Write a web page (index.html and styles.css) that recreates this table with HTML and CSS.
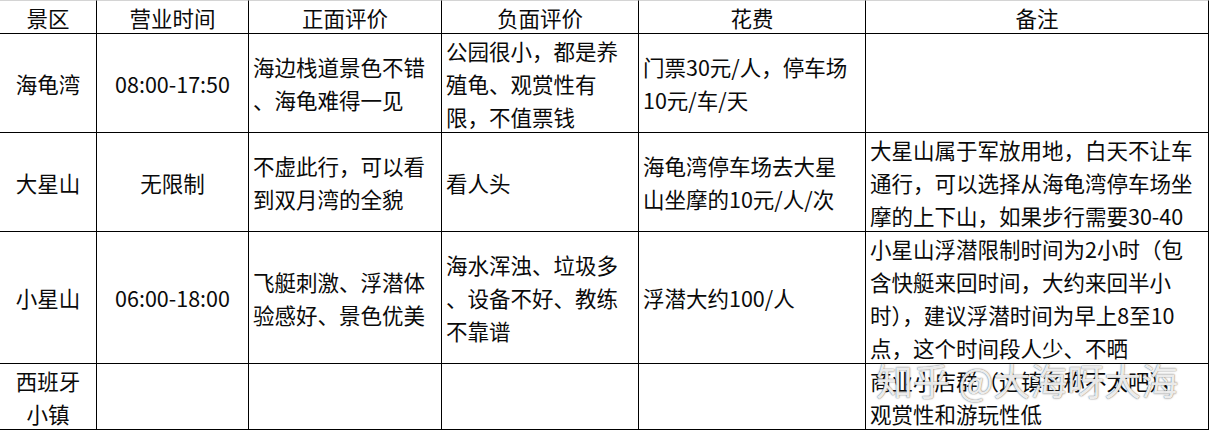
FILE: index.html
```html
<!DOCTYPE html>
<html lang="zh-CN">
<head>
<meta charset="utf-8">
<title>景区对比</title>
<link rel="stylesheet" href="styles.css">
</head>
<body>
<div class="page">
  <div class="sheet">
    <div class="cell head c">景区</div>
    <div class="cell head c">营业时间</div>
    <div class="cell head c">正面评价</div>
    <div class="cell head c">负面评价</div>
    <div class="cell head c">花费</div>
    <div class="cell head c">备注</div>

    <div class="cell c">海龟湾</div>
    <div class="cell c">08:00-17:50</div>
    <div class="cell">海边栈道景色不错<br>、海龟难得一见</div>
    <div class="cell">公园很小，都是养<br>殖龟、观赏性有<br>限，不值票钱</div>
    <div class="cell">门票30元/人，停车场<br>10元/车/天</div>
    <div class="cell"></div>

    <div class="cell c">大星山</div>
    <div class="cell c">无限制</div>
    <div class="cell">不虚此行，可以看<br>到双月湾的全貌</div>
    <div class="cell">看人头</div>
    <div class="cell">海龟湾停车场去大星<br>山坐摩的10元/人/次</div>
    <div class="cell">大星山属于军放用地，白天不让车<br>通行，可以选择从海龟湾停车场坐<br>摩的上下山，如果步行需要30-40</div>

    <div class="cell c">小星山</div>
    <div class="cell c">06:00-18:00</div>
    <div class="cell">飞艇刺激、浮潜体<br>验感好、景色优美</div>
    <div class="cell">海水浑浊、垃圾多<br>、设备不好、教练<br>不靠谱</div>
    <div class="cell">浮潜大约100/人</div>
    <div class="cell">小星山浮潜限制时间为2小时（包<br>含快艇来回时间，大约来回半小<br>时），建议浮潜时间为早上8至10<br>点，这个时间段人少、不晒</div>

    <div class="cell c">西班牙<br>小镇</div>
    <div class="cell"></div>
    <div class="cell"></div>
    <div class="cell"></div>
    <div class="cell"></div>
    <div class="cell">商业小店群（这镇名称不太吧），<br>观赏性和游玩性低</div>
  </div>
  <div class="watermark">知乎 @大海呀大海</div>
</div>
</body>
</html>
```

FILE: styles.css
```css
html, body {
  margin: 0;
  padding: 0;
  background: #ffffff;
}

.page {
  position: relative;
  width: 1209px;
  height: 430px;
  overflow: hidden;
  font-family: "Noto Sans CJK SC", "Microsoft YaHei", sans-serif;
  color: #0a0a0a;
}

.sheet {
  display: grid;
  grid-template-columns: 97px 152px 193px 197px 227px 343px;
  grid-template-rows: 34px 99px 99px 132px 66px;
}

.cell {
  box-sizing: border-box;
  border-right: 1px solid #000000;
  border-bottom: 1px solid #000000;
  display: flex;
  align-items: center;
  justify-content: flex-start;
  padding: 0 3px 0 4px;
  font-size: 21.5px;
  line-height: 33px;
  white-space: nowrap;
  overflow: hidden;
}

.cell.c {
  justify-content: center;
  text-align: center;
  padding: 0;
}

.cell.head {
  border-top: 1px solid #d4d4d4;
  line-height: 31px;
}

.watermark {
  position: absolute;
  left: 876px;
  top: 357px;
  font-family: "Noto Sans CJK SC", sans-serif;
  font-size: 37px;
  line-height: 46px;
  white-space: nowrap;
  color: rgba(255, 255, 255, 0.9);
  text-shadow: 0 0 1px rgba(60, 60, 60, 0.7), 0 0 2px rgba(90, 90, 90, 0.5);
  pointer-events: none;
}
```
